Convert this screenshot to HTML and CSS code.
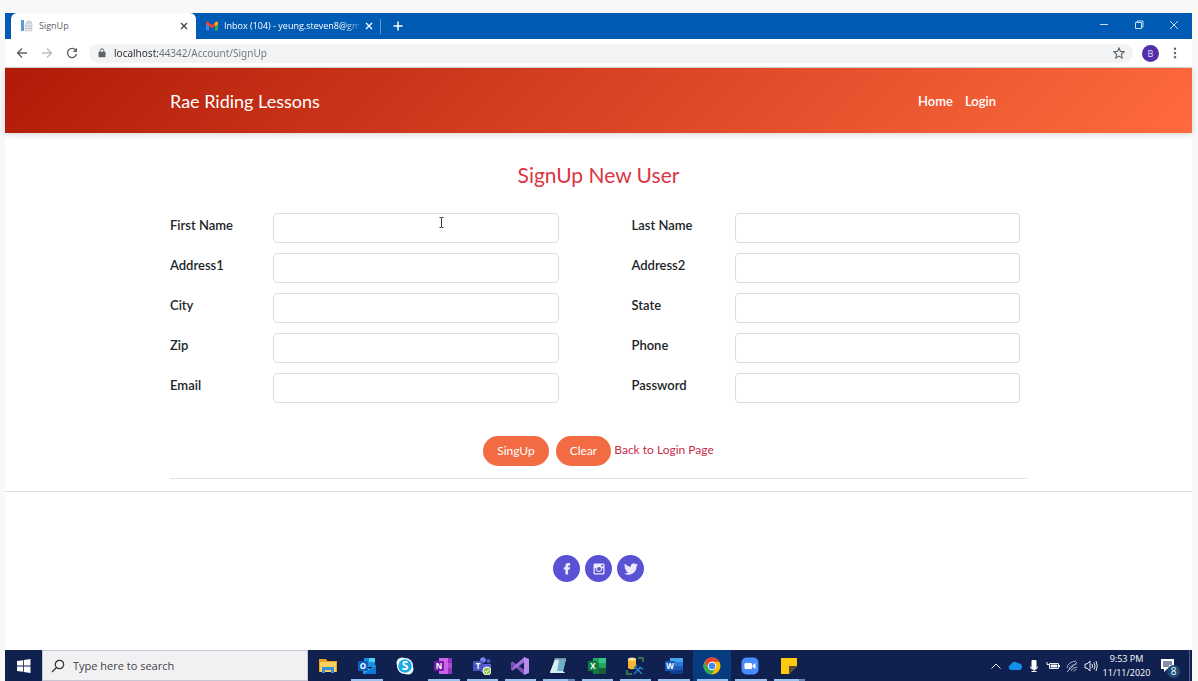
FILE: index.html
```
<!DOCTYPE html>
<html lang="en">
<head>
<meta charset="utf-8">
<title>SignUp</title>
<link rel="stylesheet" href="styles.css">
</head>
<body>
<div class="desktop">
  <header class="tabstrip">
    <div class="tab tab-active">
      <svg class="favicon" viewBox="0 0 12 12"><rect width="3" height="11" fill="#5b9bd5"/><path d="M5 4 6 1h4l1 3v7H4V4z" fill="#e3e6ea" stroke="#bcc1c7" stroke-width=".6"/><path d="M6 3h4M5 6h6M5 8.500h6" stroke="#b4bac0" stroke-width=".8"/></svg>
      <span class="tab-title">SignUp</span>
      <button class="tab-close" aria-label="Close SignUp"><svg viewBox="0 0 8 8"><path d="m1 1 6 6M7 1 1 7"/></svg></button>
    </div>
    <div class="tab tab-idle">
      <svg class="favicon" viewBox="0 0 12 12"><path d="M0 2.500 3 4.500V10.500H1Q0 10.500 0 9.500z" fill="#4285f4"/><path d="M12 2.500 9 4.500V10.500h2q1 0 1-1z" fill="#34a853"/><path d="M0 2.500Q.8 1 2.200 2L6 5 9.800 2Q11.200 1 12 2.500V4L6 8.300 0 4z" fill="#ea4335"/><path d="M9 2.600 10 1.800Q11.500 1.200 12 2.700V4L9 6.200z" fill="#fbbc04"/></svg>
      <span class="tab-title">Inbox (104) - yeung.steven8@gm</span>
      <button class="tab-close" aria-label="Close Inbox"><svg viewBox="0 0 8 8"><path d="m1 1 6 6M7 1 1 7"/></svg></button>
    </div>
    <button class="new-tab" aria-label="New tab"><svg viewBox="0 0 10 10"><path d="M5 .5v9M.5 5h9"/></svg></button>
    <div class="window-controls">
      <button aria-label="Minimize"><svg viewBox="0 0 10 10"><path d="M1 4.500h8"/></svg></button>
      <button aria-label="Restore"><svg viewBox="0 0 10 10"><path d="M1.500 2.500h6v6h-6zM3 2.500V1h6v6H7.500"/></svg></button>
      <button aria-label="Close"><svg viewBox="0 0 10 10"><path d="m1 1 8 8M9 1 1 9"/></svg></button>
    </div>
  </header>

  <div class="toolbar">
    <button class="tool" aria-label="Back"><svg viewBox="0 0 12 12"><path d="M11 6H1.500M6 1.500 1.500 6 6 10.500"/></svg></button>
    <button class="tool tool-off" aria-label="Forward"><svg viewBox="0 0 12 12"><path d="M1 6h9.500M6 1.500 10.500 6 6 10.500"/></svg></button>
    <button class="tool" aria-label="Reload"><svg viewBox="0 0 12 12"><path d="M10 3.500A4.600 4.600 0 1 0 10.600 7"/><path d="M11 .8V5H6.800z" fill="#5f6368" stroke="none"/></svg></button>
    <div class="omnibox">
      <svg class="lock" viewBox="0 0 8 10"><path d="M2.200 4V2.600a1.800 1.800 0 0 1 3.600 0V4" fill="none" stroke="#5f6368"/><rect x=".5" y="3.700" width="7" height="5.600" rx=".8" fill="#5f6368"/></svg>
      <input class="url" type="text" aria-label="Address" value="localhost:44342/Account/SignUp">
      <button class="star" aria-label="Bookmark"><svg viewBox="0 0 12 12"><path d="m6 1 1.500 3.400 3.700.4-2.800 2.500.8 3.700L6 9.100 2.800 11l.8-3.700L.8 4.800l3.700-.4z"/></svg></button>
    </div>
    <button class="avatar" aria-label="Profile">B</button>
    <button class="tool kebab" aria-label="Menu"><svg viewBox="0 0 12 12"><circle cx="6" cy="1.800" r="1.200"/><circle cx="6" cy="6" r="1.200"/><circle cx="6" cy="10.200" r="1.200"/></svg></button>
  </div>

  <div class="site">
    <nav class="navbar">
      <a class="brand" href="#">Rae Riding Lessons</a>
      <div class="nav-links"><a href="#">Home</a><a href="#">Login</a></div>
    </nav>

    <main class="content">
      <h1>SignUp New User</h1>
      <form>
        <div class="fields">
          <div class="field"><label for="first">First Name</label><span class="box"><input id="first" type="text"><svg class="cursor" viewBox="0 0 5 11"><path d="M.5.5h1.500l.5.5.5-.5h1.500M.5 10.500h1.500l.5-.5.5.5h1.500M2.500 1v9"/></svg></span></div>
          <div class="field"><label for="last">Last Name</label><span class="box"><input id="last" type="text"></span></div>
          <div class="field"><label for="addr1">Address1</label><span class="box"><input id="addr1" type="text"></span></div>
          <div class="field"><label for="addr2">Address2</label><span class="box"><input id="addr2" type="text"></span></div>
          <div class="field"><label for="city">City</label><span class="box"><input id="city" type="text"></span></div>
          <div class="field"><label for="state">State</label><span class="box"><input id="state" type="text"></span></div>
          <div class="field"><label for="zip">Zip</label><span class="box"><input id="zip" type="text"></span></div>
          <div class="field"><label for="phone">Phone</label><span class="box"><input id="phone" type="tel"></span></div>
          <div class="field"><label for="email">Email</label><span class="box"><input id="email" type="email"></span></div>
          <div class="field"><label for="password">Password</label><span class="box"><input id="password" type="password"></span></div>
        </div>
        <div class="actions">
          <button class="pill" type="button">SingUp</button>
          <button class="pill" type="reset">Clear</button>
          <a href="#">Back to Login Page</a>
        </div>
      </form>
    </main>

    <footer class="social">
      <a href="#" aria-label="Facebook"><svg viewBox="0 0 14 14"><path d="M5.400 12.500V7.600H3.800V5.300h1.600V3.900Q5.400 1 8.200 1h2v2.400H8.900q-.8 0-.8.8v1.100h2l-.3 2.300H8.100v4.900z"/></svg></a>
      <a href="#" aria-label="Instagram"><svg viewBox="0 0 14 14"><path fill-rule="evenodd" d="M2.800 1.500h8.400q1.300 0 1.300 1.300v8.400q0 1.300-1.300 1.300H2.800q-1.300 0-1.300-1.300V2.800q0-1.300 1.300-1.300zM2.800 6v5.200h8.400V6h-1.100A3.200 3.200 0 1 1 3.900 6zm6.600-3.300v1.900h1.900V2.700zM7 5a2 2 0 1 0 0 4 2 2 0 0 0 0-4z"/></svg></a>
      <a href="#" aria-label="Twitter"><svg viewBox="0 0 24 24"><path d="M24 4.600a10 10 0 0 1-2.800.8 5 5 0 0 0 2.100-2.700 10 10 0 0 1-3.100 1.200 4.900 4.900 0 0 0-8.400 4.500A14 14 0 0 1 1.700 3.100a4.900 4.900 0 0 0 1.500 6.600 5 5 0 0 1-2.200-.6 4.900 4.900 0 0 0 3.900 4.900 5 5 0 0 1-2.200.1 4.900 4.900 0 0 0 4.600 3.400A10 10 0 0 1 0 19.500 14 14 0 0 0 21.500 7.100 10 10 0 0 0 24 4.600z"/></svg></a>
    </footer>
  </div>

  <div class="taskbar">
    <button class="start" aria-label="Start"><svg viewBox="0 0 14 14" fill="#fff"><path d="M0 2 6 1.200V6.600H0zM6.800 1.100 13.500 0v6.600H6.800zM0 7.400h6v5.400L0 12zM6.800 7.400h6.700V14L6.800 12.900z"/></svg></button>
    <label class="search"><svg viewBox="0 0 14 14"><circle cx="8.500" cy="5.500" r="4.200"/><path d="M5.500 8.500 1 13"/></svg><input type="text" aria-label="Search" placeholder="Type here to search"></label>
    <div class="apps">
      <button aria-label="File Explorer"><svg viewBox="0 0 18 18"><path d="M0 2h7l1.500 2H18v11H0z" fill="#e9a21f"/><path d="M1 5h16v10H1z" fill="#ffd15c"/><path d="M3 10h12v6h-3v-3H6v3H3z" fill="#3a8fd9"/></svg></button>
      <button class="open" aria-label="Outlook"><svg viewBox="0 0 18 18"><path d="M6 1h11v9H6z" fill="#1490df"/><path d="M11 1h6v4h-6z" fill="#50d0f5"/><path d="M5 8l7 4 6-4v9H5z" fill="#28a8ea"/><path d="M5 17 18 9v8z" fill="#0f78d4"/><rect y="4" width="10" height="10" rx="1" fill="#0a5ebd"/><text x="5" y="12">O</text></svg></button>
      <button aria-label="Skype"><svg viewBox="0 0 18 18"><circle cx="6" cy="6" r="5.500" fill="#e9f7fd"/><circle cx="12" cy="12" r="5.500" fill="#e9f7fd"/><circle cx="9" cy="9" r="8" fill="#fff"/><circle cx="9" cy="9" r="6.800" fill="#19a9e8"/><text class="skype-mark" x="9" y="13">S</text></svg></button>
      <button class="open" aria-label="OneNote"><svg viewBox="0 0 18 18"><path d="M5 1h12v16H5z" fill="#ca64ea"/><path d="M14 1h4v5h-4z" fill="#9332bf"/><path d="M14 6h4v5h-4z" fill="#ae4bd5"/><path d="M14 11h4v6h-4z" fill="#8f36b5"/><rect y="4" width="10" height="10" rx="1" fill="#7719aa"/><text x="5" y="12">N</text></svg></button>
      <button class="open" aria-label="Teams"><svg viewBox="0 0 18 18"><circle cx="10" cy="3" r="2.800" fill="#7b83eb"/><circle cx="15.500" cy="4" r="2" fill="#5059c9"/><path d="M7 7h11v6q-2 4-7 3-4-1-4-4z" fill="#5b63d3"/><rect y="4" width="10" height="10" rx="1" fill="#4b53bc"/><text x="5" y="12">T</text><circle cx="14" cy="14" r="4" fill="#92c353" stroke="#fff"/><path d="m12 14 1.500 1.500L16 12.700" fill="none" stroke="#fff"/></svg></button>
      <button class="open" aria-label="Visual Studio"><svg viewBox="0 0 18 18"><path d="M0 5.500 1.500 4.500 13.500 13v5L0 6.500z" fill="#8250bd"/><path d="M0 12.500 1.500 13.500 13.500 5V0L0 11.500z" fill="#a370dc"/><path d="M0 5.500h1.800v7H0z" fill="#8250bd"/><path d="M13 0 18 2v14l-5 2z" fill="#b98bf0"/></svg></button>
      <button class="open stacked" aria-label="Notepad"><svg viewBox="0 0 18 18"><path d="M6 2h11l-3 12 2 2H1z" fill="#a9dcea"/><path d="M9 2h8l-3 12H8z" fill="#6fb1c8"/><path d="m1 15 5-12 4 .5L8 14l6 .5 2 1.500H1z" fill="#d5edf2"/><path d="M6 1h11v1.500H5z" fill="#788d96"/></svg></button>
      <button class="open" aria-label="Excel"><svg viewBox="0 0 18 18"><path d="M5 1h13v16H5z" fill="#21a366"/><path d="M11 1h7v5h-7z" fill="#33c481"/><path d="M5 6h6v5H5zM5 11h13v6H5z" fill="#107c41"/><path d="M11 11h7v6h-7z" fill="#185c37"/><rect y="4" width="10" height="10" rx="1" fill="#107c41"/><text x="5" y="12">X</text></svg></button>
      <button class="open" aria-label="SQL Server"><svg viewBox="0 0 18 18"><path d="M2 2v9q3.500 2.500 8 0V2z" fill="#f8b62b"/><ellipse cx="6" cy="2.200" rx="4" ry="1.700" fill="#ffe39a"/><path d="M12 1h5v4M1 13v4h5" fill="none" stroke="#3f8f52" stroke-width="1.400"/><path d="m9 10 7 7M15 10l-7 7M8 11l3-3M13 10l4 2" stroke="#2680c8" stroke-width="1.500"/></svg></button>
      <button class="open" aria-label="Word"><svg viewBox="0 0 18 18"><path d="M5 1h13v4H5z" fill="#41a5ee"/><path d="M5 5h13v4H5z" fill="#2b7cd3"/><path d="M5 9h13v4H5z" fill="#185abd"/><path d="M5 13h13v4H5z" fill="#103f91"/><rect y="4" width="10" height="10" rx="1" fill="#185abd"/><text x="5" y="12">W</text></svg></button>
      <button class="open current" aria-label="Chrome"><svg viewBox="0 0 18 18"><circle cx="9" cy="9" r="8.500" fill="#fbbc05"/><path d="M1.600 4.800A8.500 8.500 0 0 1 16.400 4.800H9L5.400 11z" fill="#ea4335"/><path d="M1.600 4.800A8.500 8.500 0 0 0 8.500 17.500L12.600 11 9 13 5.400 11z" fill="#34a853"/><circle cx="9" cy="9" r="4.300" fill="#fff"/><circle cx="9" cy="9" r="3.300" fill="#4285f4"/></svg></button>
      <button class="open" aria-label="Zoom"><svg viewBox="0 0 18 18"><rect x=".5" y=".5" width="17" height="17" rx="5" fill="#4a8cff"/><rect x="3.500" y="6" width="7.500" height="6" rx="1.200" fill="#fff"/><path d="m11.500 8.200 3-2.200v6l-3-2.200z" fill="#fff"/></svg></button>
      <button class="open stacked" aria-label="Sticky Notes"><svg viewBox="0 0 18 18"><path d="M1 1h16v16H1z" fill="#ffc90e"/><path d="M17 9v8H9z" fill="#10214f"/><path d="M9 9h8l-8 8z" fill="#5a4a3a"/></svg></button>
    </div>
    <div class="tray">
      <svg viewBox="0 0 14 14" class="line"><path d="M2.500 9.500 7 5l4.500 4.500"/></svg>
      <svg viewBox="0 0 14 14"><path d="M3 11a2.800 2.800 0 0 1-.2-5.500A4 4 0 0 1 10 4.500 3.300 3.300 0 0 1 11.500 11z" fill="#1590e8"/></svg>
      <svg viewBox="0 0 14 14"><rect x="4.500" y="1" width="5" height="9" rx="1" fill="#fff"/><path d="M3.500 7.500q0 3 3.500 3t3.500-3M7 10v2M4.500 12.500h5" fill="none" stroke="#fff"/></svg>
      <svg viewBox="0 0 14 14" class="line"><path d="M3.500 4.500h9v5h-9zM1 3v2.500h3M13.500 6v2"/><path d="M5 6h6v2H5z" fill="#fff"/></svg>
      <svg viewBox="0 0 14 14" class="line wifi"><path d="M2 9Q3 3 11 2M4 10.500Q5 6 11.500 5M6 12q1-3.500 6-4M8.500 12.500q.5-1.500 3-2M2 13 12 3"/></svg>
      <svg viewBox="0 0 14 14" class="line"><path d="M1 5h2l3-3v10L3 9H1zM8 5q1 2 0 4M10 3.500q2 3.500 0 7M12 2q2.500 5 0 10"/></svg>
    </div>
    <div class="clock"><span>9:53 PM</span><span>11/11/2020</span></div>
    <button class="notify" aria-label="Notifications"><svg viewBox="0 0 14 14"><path d="M0 0h13v10H6l-3 3v-3H0z" fill="#fff"/><path d="M2 3h9M2 5h9M2 7h6" stroke="#10214f"/></svg><span class="badge">8</span></button>
  </div>
</div>
</body>
</html>
```
FILE: styles.css
```
* { box-sizing: border-box; }
body {
  margin: 0;
  background: #f8f8f8;
  font-family: Lato, "Open Sans", sans-serif;
  font-size: 13px;
  line-height: 20px;
  color: #212529;
}
button { border: 0; padding: 0; margin: 0; background: none; font: inherit; color: inherit; }
a { text-decoration: none; color: inherit; }
svg { display: block; flex: none; }

.desktop {
  display: flex;
  flex-direction: column;
  min-height: 100vh;
  padding: 13px 6px 0 5px;
}

/* Browser tabs */
.tabstrip {
  display: flex;
  align-items: stretch;
  height: 26px;
  padding-left: 6px;
  background: #005bb5;
  font-family: "Open Sans", sans-serif;
  font-size: 9px;
}
.tab { display: flex; align-items: center; gap: 6px; padding: 0 8px 0 10px; }
.tab-active { width: 185px; background: #fff; border-radius: 6px 6px 0 0; color: #5a5e63; }
.tab-idle { position: relative; width: 185px; color: #fff; }
.tab-idle::after { content: ""; position: absolute; right: 0; top: 6px; width: 1px; height: 15px; background: #5f97d0; }
.favicon { width: 12px; height: 12px; }
.tab-title { flex: 1; min-width: 0; white-space: nowrap; }
.tab-idle .tab-title { -webkit-mask-image: linear-gradient(to right, #000 88%, transparent 104%); mask-image: linear-gradient(to right, #000 88%, transparent 104%); }
.tab-close svg { width: 8px; height: 8px; stroke: #3c4043; stroke-width: 1.3; }
.tab-idle .tab-close svg { stroke: #fff; }
.new-tab { padding: 0 12px; }
.new-tab svg { width: 10px; height: 10px; stroke: #fff; stroke-width: 1.5; }
.window-controls { display: flex; gap: 25px; margin-left: auto; padding: 0 13px 3px 0; }
.window-controls svg { width: 10px; height: 10px; fill: none; stroke: #c4dfef; stroke-width: 1; }

/* Browser toolbar */
.toolbar {
  display: flex;
  align-items: center;
  gap: 13px;
  height: 29px;
  padding: 0 11px;
  background: #fff;
  border-bottom: 1px solid #d5d5d5;
}
.tool svg { width: 12px; height: 12px; fill: none; stroke: #5f6368; stroke-width: 1.4; }
.tool-off svg { stroke: #bcbec1; }
.kebab svg { fill: #5f6368; stroke: none; }
.omnibox {
  display: flex;
  flex: 1;
  align-items: center;
  gap: 8px;
  height: 19px;
  margin-left: -2px;
  padding: 0 8px 0 9px;
  border-radius: 10px;
  background: #f1f3f4;
}
.lock { width: 8px; height: 10px; }
.url {
  flex: 1;
  min-width: 0;
  padding: 0;
  border: 0;
  outline: 0;
  font: 10px/18px "Noto Sans", "Open Sans", sans-serif;
  color: transparent;
  background: linear-gradient(to right, #2a2c2f 45px, #6d7175 45px);
  -webkit-background-clip: text;
  background-clip: text;
}
.star svg { width: 12px; height: 12px; fill: none; stroke: #5f6368; stroke-width: 1.1; }
.avatar {
  width: 17px;
  height: 17px;
  margin: 0 -3px 0 -4px;
  border-radius: 50%;
  background: #5130a8;
  color: #e4dcf5;
  font: 9px/17px "Open Sans", sans-serif;
}

/* Site */
.site { flex: 1; background: #fff; }
.navbar {
  display: flex;
  align-items: center;
  justify-content: space-between;
  height: 65px;
  padding: 0 196px 0 165px;
  background: linear-gradient(135deg, #b01b08, #ff6b3e);
  box-shadow: 0 2px 6px rgba(0, 0, 0, .15);
  color: #fff;
}
.brand { font-size: 18px; }
.nav-links { display: flex; gap: 12px; font-weight: 600; }
.content {
  max-width: 857px;
  margin: 0 auto;
  padding: 27px 0 12px;
}
h1 { margin: 0 0 23px; font-size: 21px; line-height: 30px; font-weight: 400; text-align: center; color: #dc3545; }
form { border-bottom: 1px solid #e3e3e3; }
.fields {
  display: grid;
  grid-template-columns: 1fr 1fr;
  gap: 10px 73px;
  padding-right: 7px;
}
.field { display: flex; height: 30px; }
.field label { width: 103px; padding-top: 2px; font-weight: 600; }
.box { position: relative; flex: 1; }
.box input {
  width: 100%;
  height: 30px;
  padding: 0 10px;
  border: 1px solid #d9dce0;
  border-radius: 4px;
  background: #fff;
  font: inherit;
}
.cursor { position: absolute; left: 58%; top: 4px; width: 5px; height: 11px; fill: none; stroke: #333; stroke-width: 1; }
.actions { display: flex; justify-content: center; padding: 33px 0 12px; font-size: 12px; }
.actions a { padding: 4px 0 0 3px; color: #c92c49; }
.pill { height: 30px; padding: 0 14px; border-radius: 15px; background: #f26b43; color: #fff; }
.pill + .pill { margin-left: 7px; }
.social {
  display: flex;
  justify-content: center;
  gap: 5px;
  padding: 63px 0 40px;
  border-top: 1px solid #dfdfdf;
}
.social a { display: grid; place-items: center; width: 27px; height: 27px; border-radius: 50%; background: #5a52d5; }
.social svg { width: 14px; height: 14px; fill: #eceafc; }

/* Taskbar */
.taskbar {
  display: flex;
  height: 31px;
  background: #10214f;
  color: #fff;
  font-family: "Open Sans", sans-serif;
}
.start { display: grid; place-items: center; width: 37px; }
.start svg { width: 14px; height: 14px; }
.search {
  display: flex;
  align-items: center;
  gap: 8px;
  width: 266px;
  padding: 0 8px;
  border: 1px solid #c6c7d2;
  background: #f1f1f4;
}
.search svg { width: 14px; height: 14px; fill: none; stroke: #333; stroke-width: 1.2; }
.search input { flex: 1; min-width: 0; padding: 0; border: 0; outline: 0; background: none; font: 11px/20px "Open Sans", sans-serif; }
.search input::placeholder { color: #444; opacity: 1; }
.apps { display: grid; grid-template-columns: repeat(13, 1fr); width: 499px; margin-left: 1px; }
.apps button { display: grid; place-items: center; position: relative; }
.apps svg { width: 18px; height: 18px; }
.apps text { fill: #fff; font-size: 8px; font-weight: 700; text-anchor: middle; }
.apps .skype-mark { font-size: 12px; }
.apps .current { background: #063c80; }
.open::after { content: ""; position: absolute; left: 4px; right: 3px; bottom: 0; height: 2px; background: #9cc3ee; }
.stacked::after { background: linear-gradient(to right, #9cc3ee 25px, #6484b8 25px); }
.tray { display: flex; align-items: center; gap: 5px; margin-left: auto; }
.tray svg { width: 14px; height: 14px; }
.line { fill: none; stroke: #e6eaf2; stroke-width: 1; }
.wifi { stroke: #a4aec6; }
.clock { display: flex; flex-direction: column; width: 57px; text-align: center; font-size: 9px; line-height: 14px; padding-top: 2px; }
.notify { position: relative; width: 35px; padding-left: 6px; border-right: 1px solid #53618a; margin-right: 2px; }
.notify svg { width: 14px; height: 14px; }
.badge {
  position: absolute;
  left: 12px;
  top: 15px;
  width: 13px;
  height: 13px;
  border-radius: 50%;
  background: #1d4c74;
  font-size: 10px;
  line-height: 13px;
  text-align: center;
}
```
